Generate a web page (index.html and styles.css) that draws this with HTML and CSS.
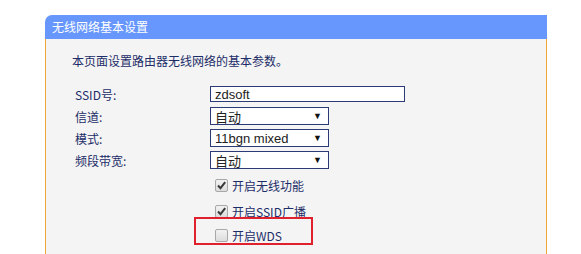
FILE: index.html
```html
<!DOCTYPE html>
<html lang="zh-CN">
<head>
    <meta charset="UTF-8">
    <title>无线网络基本设置</title>
    <link rel="stylesheet" href="styles.css">
</head>
<body>

<div class="panel">
    <div class="panel-head">无线网络基本设置</div>
    <div class="panel-body">
        <p class="intro">本页面设置路由器无线网络的基本参数。</p>

        <div class="form">
            <div class="row">
                <label>SSID号:</label>
                <div class="field text-field">zdsoft</div>
            </div>
            <div class="row">
                <label>信道:</label>
                <div class="field select-field"><span>自动</span><i class="arrow">▼</i></div>
            </div>
            <div class="row">
                <label>模式:</label>
                <div class="field select-field"><span>11bgn mixed</span><i class="arrow">▼</i></div>
            </div>
            <div class="row">
                <label>频段带宽:</label>
                <div class="field select-field"><span>自动</span><i class="arrow">▼</i></div>
            </div>
        </div>

        <div class="checks">
            <div class="check">
                <span class="box">
                    <svg width="11" height="11" viewBox="0 0 11 11"><path d="M2 5.5 L4.5 8.2 L9.2 2.2" fill="none" stroke="#3a3a3a" stroke-width="2"/></svg>
                </span>
                <span>开启无线功能</span>
            </div>
            <div class="check">
                <span class="box">
                    <svg width="11" height="11" viewBox="0 0 11 11"><path d="M2 5.5 L4.5 8.2 L9.2 2.2" fill="none" stroke="#3a3a3a" stroke-width="2"/></svg>
                </span>
                <span>开启SSID广播</span>
            </div>
            <div class="check">
                <span class="box"></span>
                <span>开启WDS</span>
                <div class="highlight"></div>
            </div>
        </div>
    </div>
</div>

</body>
</html>
```

FILE: styles.css
```css
body {
    margin: 0;
    padding: 15px 0 0 45px;
    height: 100vh;
    box-sizing: border-box;
    display: flex;
    flex-direction: column;
    background-color: #fff;
    font-family: "Noto Sans CJK SC", "Liberation Sans", sans-serif;
    font-size: 12px;
    color: #1c2d68;
}
.panel {
    width: 502px;
    flex: 1;
    display: flex;
    flex-direction: column;
}
.panel-head {
    height: 24px;
    line-height: 24px;
    padding-left: 7px;
    background-color: #6797fd;
    color: #fff;
    border-radius: 7px 0 0 0;
}
.panel-body {
    flex: 1;
    background-color: #f4f4f4;
    border-left: 1px solid #f0a43a;
    border-right: 1px solid #f0a43a;
    padding: 14px 0 0 26px;
}
.intro {
    margin: 0 0 15px 0;
    line-height: 15px;
}
.form {
    padding-left: 3px;
}
.row {
    display: flex;
    align-items: center;
    height: 22px;
}
.row label {
    width: 135px;
}
.field {
    box-sizing: border-box;
    border: 1px solid #2c3b78;
    background-color: #fff;
    color: #222;
    font-family: "Liberation Sans", "Noto Sans CJK SC", sans-serif;
    font-size: 13px;
    display: flex;
    align-items: center;
    padding-left: 4px;
}
.text-field {
    width: 195px;
    height: 16px;
}
.select-field {
    width: 119px;
    height: 18px;
    justify-content: space-between;
}
.arrow {
    font-style: normal;
    font-size: 9px;
    color: #111;
    margin-right: 6px;
}
.checks {
    padding-left: 143px;
    padding-top: 1px;
}
.check {
    display: flex;
    align-items: center;
    gap: 4px;
    height: 26px;
    position: relative;
}
.check:last-child {
    height: 22px;
}
.box {
    width: 11px;
    height: 11px;
    border: 1px solid #a8a8a8;
    border-radius: 2px;
    background: linear-gradient(#f2f2f2, #dcdcdc);
    display: flex;
}
.highlight {
    position: absolute;
    left: -21px;
    top: -7px;
    width: 119px;
    height: 28px;
    box-sizing: border-box;
    border: 2px solid #e0202c;
}
```
